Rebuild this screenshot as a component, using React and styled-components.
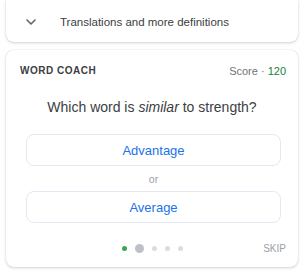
import React from 'react';
import styled, { createGlobalStyle } from 'styled-components';

const GlobalStyle = createGlobalStyle`
  html, body {
    margin: 0;
    padding: 0;
    background: #ffffff;
    font-family: "Liberation Sans", Arial, sans-serif;
  }
`

const Page = styled.div`
  width: 300px;
  height: 280px;
  overflow: hidden;
  padding: 0 2px 0 6px;
  box-sizing: border-box;
  display: flex;
  flex-direction: column;
  gap: 8px;
`

const Card = styled.section`
  background: #fff;
  border-radius: ${props => props.cut ? '0 0 8px 8px' : '8px'};
  box-shadow: 0 1px 3px rgba(60, 64, 67, 0.22), 0 0 1px rgba(60, 64, 67, 0.2);
`

const MoreRow = styled.div`
  height: 42px;
  display: flex;
  align-items: center;
  padding: 2px 0 0 17px;
  box-sizing: border-box;
  gap: 21px;
  font-size: 11.5px;
  color: #3c4043;
`

const Coach = styled(Card)`
  height: 217px;
  box-sizing: border-box;
  padding: 14px 12px 0 14px;
  display: flex;
  flex-direction: column;
`

const Header = styled.div`
  display: flex;
  justify-content: space-between;
  align-items: center;
  height: 13px;
`

const Title = styled.span`
  font-size: 10px;
  font-weight: bold;
  letter-spacing: 0.5px;
  color: #3c4043;
`

const Score = styled.span`
  font-size: 11px;
  color: #70757a;

  b {
    font-weight: normal;
    color: #188038;
  }
`

const Question = styled.p`
  margin: 20px 0 0;
  text-align: center;
  font-size: 14px;
  line-height: 20px;
  color: #3c4043;
  padding-right: 2px;
`

const Choices = styled.div`
  display: flex;
  flex-direction: column;
  align-items: stretch;
  padding: 0 5px 0 6px;
  margin-top: 17px;
`

const Choice = styled.button`
  height: 32px;
  border: 1px solid #e3e8f4;
  border-radius: 8px;
  background: #fff;
  color: #1a73e8;
  font-family: inherit;
  font-size: 13px;
  padding: 0;
`

const Or = styled.div`
  height: 25px;
  line-height: 26px;
  text-align: center;
  font-size: 10.5px;
  color: #9aa0a6;
`

const Footer = styled.div`
  margin-top: 18px;
  display: flex;
  align-items: center;
  position: relative;
  height: 14px;
`

const Dots = styled.div`
  flex: 1;
  display: flex;
  justify-content: center;
  align-items: center;
  gap: 8px;
  padding-right: 2px;
`

const Dot = styled.span`
  display: block;
  width: ${props => props.big ? 9 : 5}px;
  height: ${props => props.big ? 9 : 5}px;
  border-radius: 50%;
  background: ${props => props.active ? '#34a853' : props.big ? '#bdc1c6' : '#dadce0'};
`

const Skip = styled.span`
  position: absolute;
  right: 0;
  font-size: 10px;
  color: #9aa0a6;
`

const Chevron = () => (
  <svg width="16" height="16" viewBox="0 0 24 24" fill="none" stroke="#5f6368" strokeWidth="2.4" strokeLinecap="round" strokeLinejoin="round">
    <path d="M6 9l6 6 6-6" />
  </svg>
)

export default function App() {
  return (
    <>
      <GlobalStyle />
      <Page>
        <Card cut>
          <MoreRow>
            <Chevron />
            <span>Translations and more definitions</span>
          </MoreRow>
        </Card>
        <Coach>
          <Header>
            <Title>WORD COACH</Title>
            <Score>Score · <b>120</b></Score>
          </Header>
          <Question>Which word is <i>similar</i> to strength?</Question>
          <Choices>
            <Choice>Advantage</Choice>
            <Or>or</Or>
            <Choice>Average</Choice>
          </Choices>
          <Footer>
            <Dots>
              <Dot active />
              <Dot big />
              <Dot />
              <Dot />
              <Dot />
            </Dots>
            <Skip>SKIP</Skip>
          </Footer>
        </Coach>
      </Page>
    </>
  )
}
